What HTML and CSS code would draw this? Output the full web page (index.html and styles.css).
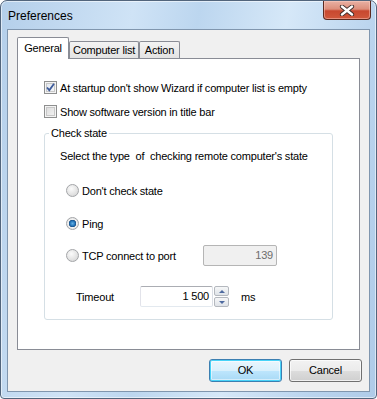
FILE: index.html
```
<!DOCTYPE html>
<html lang="en">
<head>
    <meta charset="UTF-8">
    <meta name="viewport" content="width=device-width, initial-scale=1.0">
    <link rel="stylesheet" href="styles.css">
    <title>Preferences</title>
</head>
<body>
    <div class="window">
        <div class="titlebar">
            <span class="title">Preferences</span>
            <div class="close">
                <svg width="20" height="11" viewBox="0 0 20 11">
                    <path d="M5 1.5 L15 9.5 M15 1.5 L5 9.5" stroke="#3a2a28" stroke-width="4.2" stroke-linecap="round"/>
                    <path d="M5 1.5 L15 9.5 M15 1.5 L5 9.5" stroke="#ffffff" stroke-width="2.4" stroke-linecap="round"/>
                </svg>
            </div>
        </div>

        <div class="client">
            <div class="tabarea">
                <div class="tabs">
                    <div class="tab active">General</div>
                    <div class="tab tab-computers">Computer list</div>
                    <div class="tab tab-action">Action</div>
                </div>
                <div class="panel">
                    <div class="check-row">
                        <span class="checkbox checked">
                            <svg width="11" height="11" viewBox="0 0 11 11">
                                <path d="M2 5.5 L4.3 8.2 L9 1.8" fill="none" stroke="#3d5b9b" stroke-width="1.8"/>
                            </svg>
                        </span>
                        <span>At startup don't show Wizard if computer list is empty</span>
                    </div>
                    <div class="check-row second">
                        <span class="checkbox"></span>
                        <span>Show software version in title bar</span>
                    </div>

                    <fieldset class="group">
                        <legend>Check state</legend>
                        <div class="hint">Select the type &nbsp;of &nbsp;checking remote computer's state</div>

                        <div class="radio-row first">
                            <span class="radio"></span>
                            <span>Don't check state</span>
                        </div>
                        <div class="radio-row">
                            <span class="radio selected"></span>
                            <span>Ping</span>
                        </div>
                        <div class="radio-row port-row">
                            <span class="radio"></span>
                            <span class="port-label">TCP connect to port</span>
                            <div class="field disabled">139</div>
                        </div>
                        <div class="timeout-row">
                            <span class="timeout-label">Timeout</span>
                            <div class="field">1 500</div>
                            <div class="spin">
                                <div class="spin-btn"><span class="arrow up"></span></div>
                                <div class="spin-btn"><span class="arrow down"></span></div>
                            </div>
                            <span class="unit">ms</span>
                        </div>
                    </fieldset>
                </div>
            </div>

            <div class="buttons">
                <div class="btn default">OK</div>
                <div class="btn">Cancel</div>
            </div>
        </div>
    </div>
</body>
</html>
```
FILE: styles.css
```
body {
    margin: 0;
    font-family: 'Liberation Sans', Arial, sans-serif;
    font-size: 11px;
    color: #000;
    background: #fff;
}

.window {
    width: 377px;
    height: 399px;
    box-sizing: border-box;
    border: 1px solid #52657c;
    border-radius: 7px 7px 4px 4px;
    padding: 0 6px 6px;
    background: linear-gradient(100deg, #b4cfea 0%, #cfe3f6 30%, #bcd6ef 45%, #d6e8f8 65%, #bad4ee 85%, #afcbe8 100%);
    box-shadow: inset 0 0 0 1px rgba(255, 255, 255, 0.55);
}

/* title bar */
.titlebar {
    height: 28px;
    display: flex;
    align-items: flex-start;
    justify-content: space-between;
}

.title {
    font-size: 12px;
    margin: 8px 0 0 1px;
    color: #000;
}

.close {
    width: 46px;
    height: 18px;
    margin-right: -1px;
    border: 1px solid #5b2a20;
    border-top: none;
    border-radius: 0 0 4px 4px;
    background: linear-gradient(#e9b1a4 0%, #dd8e7b 45%, #c8482f 55%, #d0583c 100%);
    box-shadow: inset 0 0 0 1px rgba(255, 210, 200, 0.45);
    display: flex;
    align-items: center;
    justify-content: center;
}

/* client area */
.client {
    height: 363px;
    box-sizing: border-box;
    border: 1px solid #8096ae;
    background: #f0f0f0;
    padding-top: 7px;
}

.tabarea {
    margin: 0 9px;
}

.tabs {
    display: flex;
    align-items: flex-end;
    height: 21px;
}

.tab {
    box-sizing: border-box;
    height: 17px;
    border: 1px solid #898c95;
    border-bottom: none;
    border-radius: 2px 2px 0 0;
    background: linear-gradient(#f3f3f3, #e3e3e3);
    text-align: center;
    line-height: 17px;
    letter-spacing: -0.2px;
}

.tab.active {
    width: 52px;
    height: 22px;
    margin-bottom: -1px;
    background: #fff;
    line-height: 21px;
    position: relative;
    z-index: 1;
}

.tab-computers {
    width: 70px;
}

.tab-action {
    width: 41px;
}

.panel {
    height: 292px;
    box-sizing: border-box;
    border: 1px solid #898c95;
    background: #fff;
    padding: 22px 26px 0 26px;
    letter-spacing: -0.2px;
}

.check-row,
.radio-row {
    display: flex;
    align-items: center;
    gap: 3px;
    height: 13px;
}

.check-row.second {
    margin-top: 11px;
}

.checkbox {
    width: 13px;
    height: 13px;
    box-sizing: border-box;
    border: 1px solid #8e8f8f;
    background: linear-gradient(135deg, #d8d8d8, #f6f6f6);
    box-shadow: inset 0 0 0 1px #f4f4f4, inset 0 0 0 2px #c8c8c8;
    display: flex;
    align-items: center;
    justify-content: center;
}

.checkbox.checked {
    background: linear-gradient(135deg, #dfe6f0, #f8f8f8);
}

/* group box */
.group {
    margin: 9px 0 0;
    padding: 0 0 18px 4px;
    border: 1px solid #d5dfe5;
    border-radius: 3px;
    height: 193px;
    box-sizing: border-box;
}

.group legend {
    padding: 0 2px;
    line-height: 12px;
}

.hint {
    margin: 11px 0 0 11px;
    line-height: 13px;
}

.radio-row {
    margin: 20px 0 0 17px;
}

.radio-row.first {
    margin-top: 21px;
}

.radio-row.port-row {
    margin-top: 15px;
    height: 21px;
}

.radio {
    width: 13px;
    height: 13px;
    box-sizing: border-box;
    border-radius: 50%;
    border: 1px solid #a3a5a8;
    background: radial-gradient(circle at 40% 35%, #fbfbfb 0%, #e4e4e4 55%, #cfcfcf 100%);
}

.radio.selected {
    background: radial-gradient(circle, #64b0e6 0%, #1f6fb4 35%, #16477d 45%, #f2f2f2 50%, #d8d8d8 100%);
}

.port-label {
    width: 118px;
}

.field {
    box-sizing: border-box;
    width: 74px;
    height: 21px;
    border: 1px solid #abadb3;
    border-color: #abadb3 #dbdfe6 #e3e9ef #e2e3ea;
    border-radius: 2px;
    background: #fff;
    text-align: right;
    line-height: 19px;
    padding-right: 3px;
}

.field.disabled {
    background: #f0f0f0;
    border-color: #b5b5b5;
    color: #6d6d6d;
}

.timeout-row {
    display: flex;
    align-items: center;
    height: 21px;
    margin: 20px 0 0 27px;
}

.timeout-label {
    width: 64px;
}

.timeout-row .field {
    width: 73px;
}

.spin {
    display: flex;
    flex-direction: column;
    gap: 1px;
    margin-left: 1px;
    height: 21px;
}

.spin-btn {
    width: 15px;
    height: 10px;
    box-sizing: border-box;
    border: 1px solid #b4b8be;
    border-radius: 2px;
    background: linear-gradient(#f6f7f8, #dfe3e8);
    display: flex;
    align-items: center;
    justify-content: center;
}

.arrow {
    width: 0;
    height: 0;
    border-left: 3px solid transparent;
    border-right: 3px solid transparent;
}

.arrow.up {
    border-bottom: 3px solid #4e6aa0;
}

.arrow.down {
    border-top: 3px solid #4e6aa0;
}

.unit {
    margin-left: 12px;
}

/* dialog buttons */
.buttons {
    display: flex;
    justify-content: flex-end;
    gap: 7px;
    margin-top: 9px;
    padding-right: 7px;
}

.btn {
    width: 73px;
    height: 23px;
    box-sizing: border-box;
    border: 1px solid #707070;
    border-radius: 3px;
    background: linear-gradient(#f2f2f2 0%, #ebebeb 50%, #dddddd 51%, #cfcfcf 100%);
    box-shadow: inset 0 0 0 1px rgba(255, 255, 255, 0.7);
    text-align: center;
    line-height: 21px;
    letter-spacing: -0.2px;
}

.btn.default {
    border-color: #3c7fb1;
    background: linear-gradient(#eaf6fd 0%, #d9f0fc 50%, #bee6fd 51%, #a7d9f5 100%);
    box-shadow: inset 0 0 0 1px #48d3f8, inset 0 0 0 2px rgba(255, 255, 255, 0.5);
}
```
